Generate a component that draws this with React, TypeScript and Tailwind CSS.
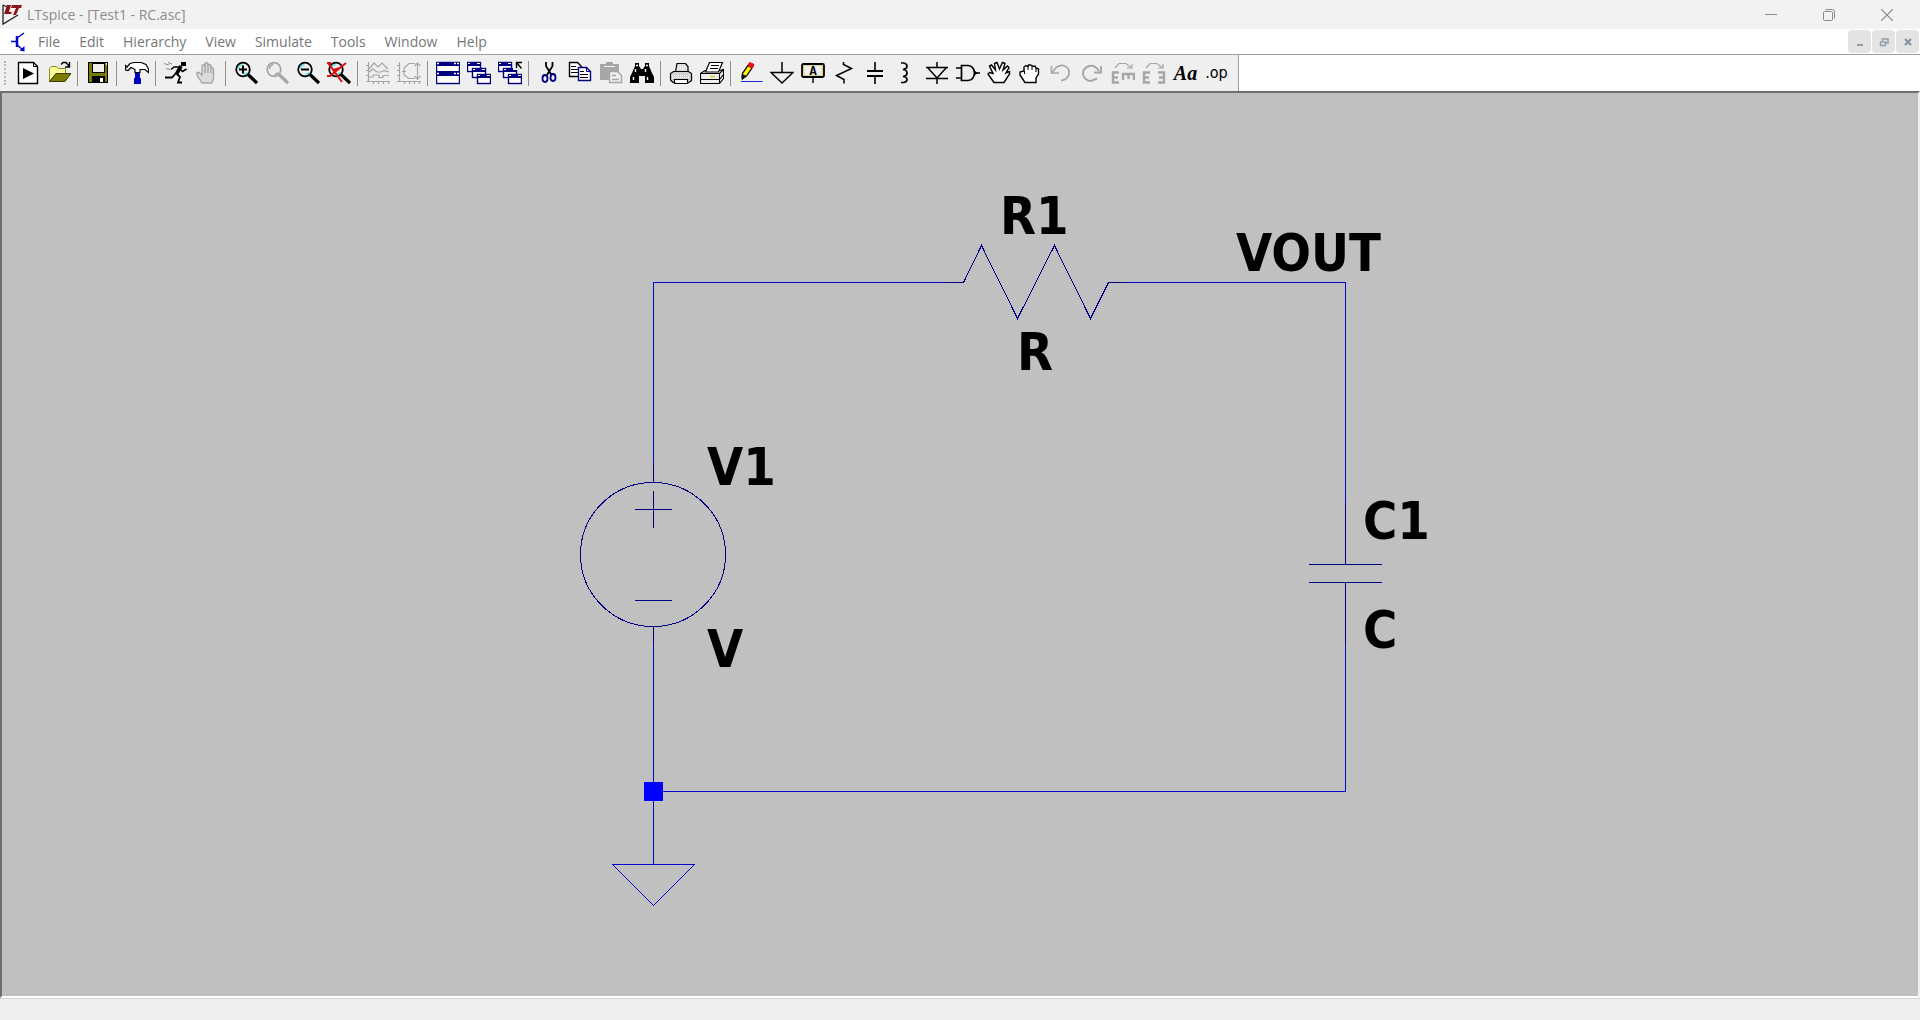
import React from "react";

const GREY = "#a6a6a6";
const NAVY = "#000080";
const OLIVE = "#7b7b00";

function Icon({ children }: { children: React.ReactNode }) {
  return (
    <svg viewBox="0 0 24 24" className="h-6 w-6 shrink-0" fill="none" stroke="#000" strokeWidth="1.4" aria-hidden="true">
      {children}
    </svg>
  );
}

function Lens({ color = "#000" }: { color?: string }) {
  return (
    <>
      <path d="M14 13.5L23 22" stroke={color} strokeWidth="3.2" />
      <circle cx="9" cy="8.5" r="6.8" stroke={color} strokeWidth="1.8" fill="#efefef" />
      <path
        d="M4.5 8a5 5 0 0 1 4-4.5M9.5 13.5a5 5 0 0 0 3.5-2"
        stroke={color === "#000" ? "#5fe0e0" : GREY}
        strokeWidth="1.5"
      />
    </>
  );
}

function MiniWindow({ x, y }: { x: number; y: number }) {
  return (
    <>
      <rect x={x + 0.5} y={y + 0.5} width="13" height="9" fill="#fff" stroke={NAVY} />
      <rect x={x} y={y} width="14" height="4" fill={NAVY} stroke="none" />
      <rect x={x + 1} y={y + 1} width="2" height="1" fill="#fff" stroke="none" />
      <rect x={x + 10} y={y + 1} width="3" height="1" fill="#fff" stroke="none" />
    </>
  );
}

const cascade = (
  <>
    <MiniWindow x={0} y={1} />
    <MiniWindow x={5} y={7} />
    <MiniWindow x={10} y={13} />
  </>
);

const plotAxes = (
  <path d="M2.5 1V20.5H24M0 4.5H2M0 9.5H2M0 14.5H2M0 20.5H2M7.5 20V23M12.5 20V23M17.5 20V23M22.500 20V23" />
);

const turnArrow = <path d="M4 7L8 2.5H15L20 6.5M21 3V7H16" stroke={GREY} strokeWidth="1.2" />;

const icons: Record<string, React.ReactNode> = {
  "New schematic": (
    <Icon>
      <path d="M2.5 1.5H17.5L21.5 5.500V22.500H2.5Z" fill="#fff" />
      <path d="M17.5 1.5V5.500H21.5" strokeWidth="1" />
      <path d="M7 7L18 12.5L7 18Z" fill="#000" stroke="none" />
    </Icon>
  ),
  Open: (
    <Icon>
      <path d="M2.5 21V7.500L4.500 5.500H9.500L11.500 7.500H18.500V12.500H9Z" fill="#ffff9c" stroke="#8a8a20" strokeWidth="1" />
      <path d="M2.5 20.5L9 12.500H24L18 20.500Z" fill={OLIVE} stroke="#3c3c00" strokeWidth="1" />
      <path d="M14 3.500L16 1.500H19L22 5M22.500 1V6H18" />
    </Icon>
  ),
  Save: (
    <Icon>
      <rect x="2.5" y="1.5" width="19" height="20" fill={OLIVE} strokeWidth="1" />
      <rect x="6.5" y="2.5" width="12" height="9" fill="#efefef" strokeWidth="1" />
      <rect x="6" y="15" width="13" height="7" fill="#000" stroke="none" />
      <rect x="14" y="17" width="3" height="4" fill="#fff" stroke="none" />
      <rect x="20" y="2" width="1" height="2" fill="#fff" stroke="none" />
    </Icon>
  ),
  "Control panel": (
    <Icon>
      <rect x="10" y="10" width="5" height="13" fill="#0000c8" stroke="none" />
      <rect x="9" y="17" width="7" height="6" fill="#0000c8" stroke="none" />
      <path d="M0.5 9V4.500L2 6L5 2.500L9 1.500H16L21 3.500L23.500 8V11.500L20 8.500H15V11.500H10V8.500L6 6.500L3 9.500Z" fill="#fff" strokeWidth="1.2" />
    </Icon>
  ),
  Run: (
    <Icon>
      <rect x="17" y="1" width="5" height="4" fill="#000" stroke="none" />
      <path d="M17 5L12.500 13" strokeWidth="3.6" />
      <path d="M15 6H10L7 8.500M16 8L18.500 10.500L22.500 8" strokeWidth="1.5" />
      <path d="M12 12L8 16.500H1M12.500 12.500L16 16L14 21.500H18" strokeWidth="1.8" />
      <path d="M0 2.500L5 4M4 1.500L8 3M2 7.500L6 8.500" stroke="#888" strokeWidth="1" />
    </Icon>
  ),
  Halt: (
    <Icon>
      <path d="M7 22L2 14V11.500H4L7 14V4.500Q8.500 3 10 4.500V2.500Q11.500 1 13 2.500V4Q15 2.500 16 4.500V6.500Q18.500 6 18.500 8.500V18L16.500 22Z" fill="#dcdcdc" stroke={GREY} />
      <path d="M10 4V12M13 3V12M16 5V12" stroke={GREY} />
    </Icon>
  ),
  "Zoom in": (
    <Icon>
      <Lens />
      <path d="M5 8.500H13M9 4.500V12.500" strokeWidth="2" />
    </Icon>
  ),
  "Zoom back": (
    <Icon>
      <Lens color={GREY} />
    </Icon>
  ),
  "Zoom out": (
    <Icon>
      <Lens />
      <path d="M5 8.500H13" strokeWidth="2" />
    </Icon>
  ),
  "Zoom full extents": (
    <Icon>
      <Lens />
      <path d="M0 2H4M1 2L15 21M19 2L3 15H0M6 9L13 7" stroke="#e01010" strokeWidth="2" />
    </Icon>
  ),
  "Autorange Y axis": (
    <Icon>
      <g stroke={GREY} strokeWidth="1.2">
        {plotAxes}
        <path d="M3 8L8 2L12 6L16 2L22 8M3 11L7 8L11 11H15L18 9.500L23 11M3 16H7V14H13V16.500H17V14.500H23" />
      </g>
    </Icon>
  ),
  "Plot settings": (
    <Icon>
      <g stroke={GREY} strokeWidth="1.2">
        {plotAxes}
        <path d="M18 2.500H12L7 7V14L12 17.500H18M5 10.500H9M20.500 2V19M17.500 5L20.500 2L23.500 5M17.500 15L20.500 18L23.500 15" />
      </g>
    </Icon>
  ),
  Tile: (
    <Icon>
      <rect x="0.5" y="1.5" width="23" height="21" fill="#fff" stroke={NAVY} />
      <rect x="0" y="1" width="24" height="4" fill={NAVY} stroke="none" />
      <rect x="0" y="10" width="24" height="5" fill={NAVY} stroke="none" />
      <path d="M1 2.500H3M18 2.500H20M21 2.500H23M1 12.500H3M18 12.500H20M21 12.500H23" stroke="#fff" />
    </Icon>
  ),
  Cascade: <Icon>{cascade}</Icon>,
  "Close all": (
    <Icon>
      {cascade}
      <rect x="15" y="0" width="9" height="9" fill="#efefef" stroke="none" />
      <path d="M18.500 7V1.500H24M19 2L23.500 7.500" />
    </Icon>
  ),
  Cut: (
    <Icon>
      <path d="M9 1V5L14.500 14M15.500 1V5L10 14" strokeWidth="1.8" />
      <ellipse cx="8" cy="17.500" rx="2.500" ry="3.500" stroke={NAVY} strokeWidth="1.8" />
      <ellipse cx="16" cy="16.500" rx="2.500" ry="3.500" stroke={NAVY} strokeWidth="1.8" />
    </Icon>
  ),
  Copy: (
    <Icon>
      <path d="M1.5 1.5H9.500L13.500 5.500V15.500H1.500Z" fill="#fff" />
      <path d="M3 5.500H8M3 8.500H10M3 11.500H10" strokeWidth="1" />
      <path d="M10.500 6.500H18.500L22.500 10.500V19.500H10.500Z" fill="#fff" stroke={NAVY} />
      <path d="M18.500 6.500V10.500H22.500" stroke={NAVY} strokeWidth="1" />
      <path d="M12 10.500H16M12 13.500H20M12 16.500H20" strokeWidth="1" />
    </Icon>
  ),
  Paste: (
    <Icon>
      <path d="M1 3H7V1H14V3H20V19H1Z" fill={GREY} stroke="none" />
      <path d="M5 5.500H16" stroke="#efefef" strokeWidth="1" />
      <path d="M10.500 10.500H18.500L22.500 14.500V21.500H10.500Z" fill="#efefef" stroke={GREY} />
      <path d="M13 14.500H17M13 18.500H20" stroke={GREY} />
    </Icon>
  ),
  Find: (
    <Icon>
      <path d="M5 2H9V5L11 8H13L15 5V2H19V5L22 12L24 16V22H15V15H9V22H0V16L2 12L5 5Z" fill="#000" stroke="none" />
      <path d="M6 4.500H8M16 4.500H18M5.500 8V11M15.500 8V11M3.500 16V19M17.500 16V19" stroke="#fff" />
    </Icon>
  ),
  "Print setup": (
    <Icon>
      <path d="M1.500 19V12.500L4.500 10.500H19.500L22.500 12.500V19.500L20 21.500H4Z" fill="#d2d2d2" strokeWidth="1.2" />
      <path d="M6.500 10.500L8 2.500H16.500L19 5.500V10.500Z" fill="#ddd" strokeWidth="1.2" />
      <path d="M3 14.500H21M3 16.500H21M9 5.500H16M9 7.500H17" stroke="#fff" strokeWidth="1" strokeDasharray="1 1" />
      <path d="M5.500 18.500H18.500V22.500H5.500Z" fill="#fff" strokeWidth="1.2" />
    </Icon>
  ),
  Print: (
    <Icon>
      <path d="M0.500 12.500L5 9.500H20L23.500 8.500V17.500L19.500 22.500H0.500Z" fill="#efefef" strokeWidth="1.2" />
      <path d="M5.500 11L9.500 1.500H22.500L18.500 11Z" fill="#fff" strokeWidth="1.2" />
      <path d="M11 4.500H19M10 7.500H18M1 12.500H19.500L23 9M19.500 13V22M1 18.500H19M20 18L23 14" strokeWidth="1.1" />
      <path d="M10 15.500H15" stroke="#d8d000" />
    </Icon>
  ),
  Wire: (
    <Icon>
      <path d="M3.500 16V12.500L9 4.500L13 7L7.500 15Z" fill="#ffef00" strokeWidth="1.3" />
      <path d="M9 4.500L10.500 1.500L14.500 3V5.500L13 7Z" fill="#e81010" stroke="#e81010" strokeWidth="1" />
      <path d="M3 13.500V18.500L7 15.500Z" fill="#000" strokeWidth="1" />
      <path d="M2 20.500H23.500" stroke="#2020d8" strokeWidth="1" />
    </Icon>
  ),
  Ground: (
    <Icon>
      <path d="M12 1V11M1 11.500H23L12 22Z" strokeWidth="1.5" />
    </Icon>
  ),
  "Label net": (
    <Icon>
      <rect x="1" y="3" width="22" height="13" rx="1.5" strokeWidth="1.8" fill="#d9d48a" />
      <rect x="3.500" y="5" width="17" height="9" fill="#efefef" stroke="none" />
      <path d="M12 16V22" />
      <text x="12" y="13.500" textAnchor="middle" fill="#000" stroke="none" className="font-['Liberation_Mono',monospace] text-[12px] font-bold">A</text>
    </Icon>
  ),
  Resistor: (
    <Icon>
      <path d="M11.500 1V3.500L19.500 7.500L4.500 14.500L12 18.500V22.500" strokeWidth="1.5" />
    </Icon>
  ),
  Capacitor: (
    <Icon>
      <path d="M12 1V10M12 15V23" strokeWidth="1.6" />
      <path d="M4 10H20M4 15H20" strokeWidth="2.2" />
    </Icon>
  ),
  Inductor: (
    <Icon>
      <path d="M7 2H10Q13 3 13 5Q13 8 9 8.500Q13 9 13 12Q13 15 9 15.500Q13 16 13 18.500Q13 21 10 21.500H7" strokeWidth="1.7" />
    </Icon>
  ),
  Diode: (
    <Icon>
      <path d="M12 1V6M12 17V23M1 6.500H23M2.500 6.500L12 17L21.500 6.500M1 17.500H23" strokeWidth="1.5" />
    </Icon>
  ),
  Component: (
    <Icon>
      <path d="M0 7H5M0 17H5M5.500 4.500H12Q18 5 18.500 12Q18 19 12 19.500H5.500ZM18.500 12H24" strokeWidth="1.7" />
      <path d="M19 10L22 12L19 14Z" fill="#000" stroke="none" />
    </Icon>
  ),
  Move: (
    <Icon>
      <path d="M7 21.500L1 13L2.500 11.500L6 12.500L2.500 5L4.500 4L8.500 9L7.500 2.500L10 1.500L12.500 8L15.500 1.500L18 2.500L16 9L20.500 5L22 6.500L19 12L22.500 10.500V13L17 21.500Z" fill="#fff" />
    </Icon>
  ),
  Drag: (
    <Icon>
      <path d="M7 21.500L2 14V11L6 10V6L8 4.500L10 5.500L11 3.500L14 4.500L15 5.500L17 5L18 7L20.500 8V13L18 17V21.500Z" fill="#fff" />
      <path d="M6.500 10V13M10 5V9M14 5V9M18 7V11" strokeWidth="1" />
    </Icon>
  ),
  Undo: (
    <Icon>
      <path d="M4 11Q7 4 14 4.500Q21 6 20 13Q18.500 19 12 19.500M2.500 5V12H10" stroke={GREY} strokeWidth="1.7" />
    </Icon>
  ),
  Redo: (
    <Icon>
      <path d="M19 10Q15 3.500 9 5Q2.500 7.500 3 13.500Q5 20 11 20L17 17.500M21 5V11.500H14" stroke={GREY} strokeWidth="1.9" />
    </Icon>
  ),
  Rotate: (
    <Icon>
      {turnArrow}
      <path d="M8 11.500H2V21.500H8M2 16.500H7M12 19V13H23V19M17.500 13V18" stroke={GREY} strokeWidth="2.4" />
    </Icon>
  ),
  Mirror: (
    <Icon>
      {turnArrow}
      <path d="M8 11.500H2V21.500H8M2 16.500H7M16 11.500H22V21.500H16M22 16.500H17" stroke={GREY} strokeWidth="2.4" />
    </Icon>
  ),
};

const groups: string[][] = [
  ["New schematic", "Open"],
  ["Save"],
  ["Control panel"],
  ["Run", "Halt"],
  ["Zoom in", "Zoom back", "Zoom out", "Zoom full extents"],
  ["Autorange Y axis", "Plot settings"],
  ["Tile", "Cascade", "Close all"],
  ["Cut", "Copy", "Paste", "Find"],
  ["Print setup", "Print"],
  ["Wire", "Ground", "Label net", "Resistor", "Capacitor", "Inductor", "Diode", "Component", "Move", "Drag", "Undo", "Redo", "Rotate", "Mirror"],
];

const menus = ["File", "Edit", "Hierarchy", "View", "Simulate", "Tools", "Window", "Help"];

function TitleBar() {
  return (
    <header className="flex h-[29px] shrink-0 items-center bg-[#f2f2f2] pr-1 pl-0.5">
      <svg viewBox="0 0 21 22" className="h-[22px] w-[21px]" fill="none" aria-hidden="true">
        <path d="M1 1V20L16 11M1 1L7 4" stroke="#222" strokeWidth="1.3" />
        <path d="M5 1H9L7 8H10L9 10H2Z" fill="#8c1515" />
        <path d="M10 1H20L19 4H17L14 11H11L14 4H9Z" fill="#8c1515" />
      </svg>
      <h1 className="ml-1 flex-1 text-[14px] leading-5 text-[#8c8c8c]">LTspice - [Test1 - RC.asc]</h1>
      <button aria-label="Minimize" className="flex h-full w-[58px] items-center justify-center">
        <svg viewBox="0 0 12 12" className="h-3 w-3" stroke="#8a8a8a" aria-hidden="true"><path d="M0 5.500H12" /></svg>
      </button>
      <button aria-label="Restore" className="flex h-full w-[58px] items-center justify-center">
        <svg viewBox="0 0 12 12" className="h-3 w-3" fill="none" stroke="#8a8a8a" aria-hidden="true">
          <rect x="0.5" y="2.5" width="9" height="9" rx="1" />
          <path d="M2.500 0.500H9.500Q11.500 0.500 11.500 2.500V9.500" />
        </svg>
      </button>
      <button aria-label="Close" className="flex h-full w-[58px] items-center justify-center">
        <svg viewBox="0 0 12 12" className="h-3 w-3" stroke="#858585" strokeWidth="1.2" aria-hidden="true"><path d="M0 0L12 12M12 0L0 12" /></svg>
      </button>
    </header>
  );
}

function MenuBar() {
  const mdi = "flex h-[23px] w-[23px] items-center justify-center rounded-sm bg-[#e4e4e4]";
  return (
    <div className="flex h-[25px] shrink-0 items-center bg-white pr-px pl-[11px]">
      <svg viewBox="0 0 14 20" className="h-5 w-3.5" fill="none" stroke="#0000d0" strokeWidth="1.5" aria-hidden="true">
        <path d="M0 9.500H5M6 6L13 1M6 13L12 18" />
        <path d="M6 4V15" strokeWidth="2.5" />
        <path d="M13.500 19.500V14L8.500 18.500Z" fill="#0000d0" stroke="none" />
      </svg>
      <nav className="flex flex-1 items-center gap-px pl-1" aria-label="Main menu">
        {menus.map((m) => (
          <button key={m} className="px-[9px] text-[14px] leading-6 text-[#767676]">{m}</button>
        ))}
      </nav>
      <div className="flex gap-px">
        <button aria-label="Minimize document" className={mdi}>
          <svg viewBox="0 0 10 10" className="h-2.5 w-2.5" aria-hidden="true"><path d="M2 8H8" stroke="#929eac" strokeWidth="2" /></svg>
        </button>
        <button aria-label="Restore document" className={mdi}>
          <svg viewBox="0 0 10 10" className="h-2.5 w-2.5" fill="none" stroke="#929eac" strokeWidth="1.5" aria-hidden="true">
            <path d="M3.500 4V2H9V6H7M1.500 5H6.500V8.500H1.500Z" />
          </svg>
        </button>
        <button aria-label="Close document" className={mdi}>
          <svg viewBox="0 0 10 10" className="h-2.5 w-2.5" stroke="#8793a3" strokeWidth="2.2" aria-hidden="true"><path d="M2 2L8 8M8 2L2 8" /></svg>
        </button>
      </div>
    </div>
  );
}

function ToolBar() {
  return (
    <div className="flex h-[37px] shrink-0 border-t border-[#9d9d9d] bg-white">
      <div role="toolbar" aria-label="Tools" className="flex items-center border-r border-[#9d9d9d] bg-[#efefef] pr-1.5">
        <div className="mr-[7px] ml-1 h-6 border-l-2 border-dotted border-[#b8b8b8]" />
        {groups.map((g, i) => (
          <React.Fragment key={i}>
            {i > 0 && <div className="mr-[5px] ml-0.5 h-[25px] w-px bg-[#909090]" />}
            {g.map((name) => (
              <button key={name} aria-label={name} className="flex h-7 w-[31px] items-center pl-[3px]">
                {icons[name]}
              </button>
            ))}
          </React.Fragment>
        ))}
        <button aria-label="Text" className="h-7 w-[31px] text-center font-['Liberation_Serif',serif] text-[20px] leading-7 font-bold italic">Aa</button>
        <button aria-label="SPICE directive" className="h-7 w-[31px] text-center font-['DejaVu_Sans_Condensed','DejaVu_Sans',sans-serif] text-[16px] leading-6">.op</button>
      </div>
    </div>
  );
}

function Schematic() {
  return (
    <svg viewBox="2 93 1916 903" className="block h-full w-full" fill="none" role="img" aria-label="RC circuit schematic">
      <g stroke="#0808cc" shapeRendering="crispEdges">
        <path d="M653.500 463V282.500H945M1127 282.500H1345.500V502M1345.500 645V791.500H653.500M653.500 645V864.500" />
        <path d="M612.500 864.500H694.500L653.500 905.500Z" />
      </g>
      <g stroke="#000080" shapeRendering="crispEdges">
        <path d="M945 282.500H963.500L981.500 245.500L1017.500 318.500L1054.500 245.500L1090.500 318.500L1108.500 282.500H1127" />
        <path d="M653.500 463V482.500M653.500 626.500V645M635 509.500H672M653.500 491V528M635 600.500H672" />
        <ellipse cx="653" cy="554.500" rx="72.500" ry="72" />
        <path d="M1345.500 502V564.500M1309 564.500H1382M1309 582.500H1382M1345.500 582.500V645" />
      </g>
      <rect x="644" y="782" width="19" height="19" fill="#0000ff" />
      <g fill="#000" className="font-['DejaVu_Sans_Condensed','DejaVu_Sans',sans-serif] text-[52px] font-bold">
        <text x="1000" y="234">R1</text>
        <text x="1017" y="370">R</text>
        <text x="1236" y="271">VOUT</text>
        <text x="707" y="485">V1</text>
        <text x="707" y="667">V</text>
        <text x="1363" y="539">C1</text>
        <text x="1363" y="648">C</text>
      </g>
    </svg>
  );
}

export default function App() {
  return (
    <div className="flex h-screen flex-col overflow-hidden bg-[#efefef] font-['Open_Sans','Noto_Sans',sans-serif]">
      <TitleBar />
      <MenuBar />
      <ToolBar />
      <main className="min-h-0 flex-1 border-2 border-t-[#6e6e6e] border-r-[#efefef] border-b-white border-l-[#6e6e6e] bg-[#c0c0c0]">
        <Schematic />
      </main>
      <footer className="h-[22px] shrink-0 border-t border-[#d4d4d4] bg-[#efefef]" />
    </div>
  );
}
